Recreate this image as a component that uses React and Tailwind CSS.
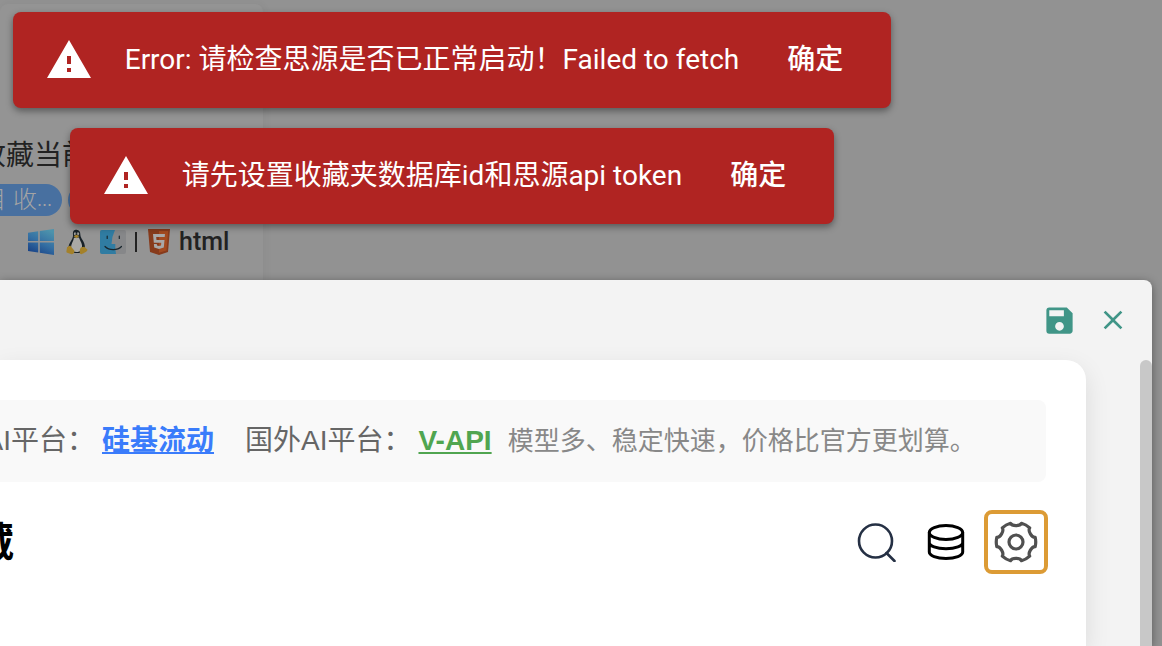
import React from "react";
import { MdWarning, MdSave, MdClose } from "react-icons/md";

const toasts = [
  "Error: 请检查思源是否已正常启动！Failed to fetch",
  "请先设置收藏夹数据库id和思源api token",
];

function WindowsIcon() {
  return (
    <svg viewBox="0 0 26 26" className="size-[26px]" aria-hidden="true">
      <defs>
        <linearGradient id="win" x1="0.7" y1="0" x2="0.2" y2="1">
          <stop offset="0" stopColor="#4d93ac" />
          <stop offset="0.5" stopColor="#346fa3" />
          <stop offset="1" stopColor="#163e84" />
        </linearGradient>
      </defs>
      <path fill="url(#win)" d="M0 3.7 10.2 2.2V12H0ZM11.8 2 26 0V12H11.8ZM0 13.6H10.2V23.4L0 22ZM11.8 13.6H26V26L11.8 23.8Z" />
    </svg>
  );
}

function LinuxIcon() {
  return (
    <svg viewBox="0 0 22 26" className="h-[26px] w-[22px]" aria-hidden="true">
      <path fill="#182128" d="M7 6C6.600 2 8 .8 10.600.8S14.400 3 14.400 6c0 3.500 4.600 6.500 4.600 12.500 0 3.500-3 5.500-8 5.500s-8.500-2-8.500-5C2.500 13.500 7.300 11 7 6Z" />
      <path fill="#aaa9a6" d="M8 8.700 13 8.500C14 12 16.600 14.600 16 18.500 15.500 22 13.500 23 10.500 23S5.500 21.500 5 18.500C5 15 7.500 12 8 8.700Z" />
      <ellipse cx="9" cy="4.800" rx="1.100" ry="1.500" fill="#aaa9a6" />
      <ellipse cx="12" cy="4.800" rx="1.200" ry="1.500" fill="#aaa9a6" />
      <circle cx="9.300" cy="5" r=".5" fill="#182128" />
      <circle cx="11.800" cy="5" r=".5" fill="#182128" />
      <path fill="#a4812a" d="M7.600 7.200 10.300 5.700 13.400 7 10.500 9.200ZM1 18.300 4.200 16.600 8.400 21.700C8.500 24 7.200 25.400 5.500 25.200L.6 23.600C0 22.600 1 20 1 18.300ZM15.200 18.200 18.300 17.700 21.600 20.800C21.500 22.400 17.500 24.500 15.500 25.200 13.400 25.300 13.600 22.500 14 20Z" />
    </svg>
  );
}

function FinderIcon() {
  return (
    <svg viewBox="0 0 26 24" className="h-6 w-[26px]" aria-hidden="true">
      <rect width="26" height="24" rx="2" fill="#868789" />
      <path fill="#307ca2" d="M15 0H2Q0 0 0 2V22Q0 24 2 24H16Q15 19 15.300 14H11.500Q12 6 15 0Z" />
      <path fill="none" stroke="#18262d" strokeWidth="1.200" strokeLinecap="round" d="M7.200 6V8.500M19.300 6V8.500M5 16.500C9 20.600 17.500 20.600 21.500 16.500" />
    </svg>
  );
}

function HtmlIcon() {
  return (
    <svg viewBox="0 0 22 26" className="h-[26px] w-[22px]" aria-hidden="true">
      <path fill="#873b1c" d="M0 0H22L20 23 11 26 2 23Z" />
      <path fill="#a34a20" d="M11 2H20.200L18.500 21.500 11 23.800Z" />
      <path fill="#a8a8a8" d="M5 5H17L16.700 8H8.200L8.500 11H16.500L15.800 18.500 11 20 6.200 18.500 5.900 15H8.800L9 16.500 11 17.100 13 16.500 13.300 13.800H5.800Z" />
    </svg>
  );
}

function BookmarkCard() {
  return (
    <section className="mt-1 flex h-[300px] w-[263px] flex-col overflow-hidden rounded-t-lg bg-[#949494] pt-[132px] text-[#222] shadow-[2px_0_8px_rgba(0,0,0,0.04)]">
      <div className="flex h-10 w-[90px] items-center justify-end text-[28px] whitespace-nowrap">收藏当前</div>
      <div className="mt-1.5 flex h-9 items-center gap-1.5">
        <div className="-ml-10 flex h-8 w-[102px] shrink-0 items-center justify-end rounded-full bg-[#4870a0] pr-2.5 text-2xl font-light whitespace-nowrap text-[#a4a4a4]">
          项目 收<span className="text-lg">...</span>
        </div>
        <div className="h-8 w-24 rounded-full bg-[#4870a0]" />
      </div>
      <div className="mt-1 flex h-10 items-center pl-7">
        <WindowsIcon />
        <span className="ml-3 flex"><LinuxIcon /></span>
        <span className="ml-3 flex"><FinderIcon /></span>
        <span className="ml-[9px] h-5 w-0.5 bg-[#222]" />
        <span className="ml-[11px] flex"><HtmlIcon /></span>
        <span className="ml-[9px] font-['Roboto','Noto_Sans_CJK_SC',sans-serif] text-[25px] font-medium">html</span>
      </div>
    </section>
  );
}

function Toast({ message }) {
  return (
    <div role="alert" className="flex h-24 items-center rounded-lg bg-[#b02422] px-8 text-[28px] whitespace-nowrap text-white shadow-[0_3px_7px_rgba(0,0,0,0.4)]">
      <MdWarning className="size-12" aria-hidden="true" />
      <p className="ml-8">{message}</p>
      <button type="button" className="ml-8 px-4 font-medium">确定</button>
    </div>
  );
}

function Toolbar() {
  return (
    <div className="mt-7 -mr-0.5 flex h-16 items-center justify-between">
      <h1 className="-ml-[66px] text-[40px] font-bold text-black">收藏</h1>
      <div className="flex items-center">
        <button type="button" aria-label="搜索" className="size-10">
          <svg viewBox="0 0 40 40" className="size-10" fill="none" stroke="#253044" strokeWidth="2.600" strokeLinecap="round">
            <circle cx="18.500" cy="19" r="16.500" />
            <path d="m29.500 31 8 8" />
          </svg>
        </button>
        <button type="button" aria-label="数据库" className="ml-[29px] size-10">
          <svg viewBox="0 0 40 40" className="size-10" fill="none" stroke="#000" strokeWidth="3">
            <ellipse cx="20" cy="10.500" rx="16.700" ry="7" />
            <path d="M3.300 10.500V30C3.300 33.500 10.500 36.500 20 36.500S36.700 33.500 36.700 30V10.500M3.300 20.500C3.300 24 10.500 26.700 20 26.700S36.700 24 36.700 20.500" />
          </svg>
        </button>
        <button type="button" aria-label="设置" className="ml-[18px] flex size-16 items-center justify-center rounded-lg border-4 border-[#dc9b35]">
          <svg viewBox="0 0 44 44" className="size-11" fill="none" stroke="#505050" strokeWidth="3.200" strokeLinejoin="round">
            <path d="M16.500 3.300C18 6.500 26 6.500 27.500 3.300Q32 4.500 35.700 7.900C33.700 10.800 37.700 17.700 41.200 17.400Q42.300 22 41.200 26.600C37.700 26.300 33.700 33.200 35.700 36.100Q32 39.500 27.500 40.700C26 37.500 18 37.500 16.500 40.700Q12 39.500 8.300 36.100C10.300 33.200 6.300 26.300 2.800 26.600Q1.700 22 2.800 17.400C6.300 17.700 10.300 10.800 8.300 7.900Q12 4.500 16.500 3.300Z" />
            <circle cx="22" cy="22" r="7" />
          </svg>
        </button>
      </div>
    </div>
  );
}

function SettingsDialog() {
  return (
    <main role="dialog" aria-label="收藏" className="absolute top-[280px] right-2.5 bottom-0 left-0 flex flex-col overflow-hidden rounded-tr-lg bg-[#f3f3f3] shadow-[0_2px_10px_rgba(0,0,0,0.4)]">
      <header className="flex h-20 shrink-0 items-center justify-end gap-5 pr-[23px] text-[#409587]">
        <button type="button" aria-label="保存"><MdSave className="size-[35px]" /></button>
        <button type="button" aria-label="关闭"><MdClose className="size-8" /></button>
      </header>
      <div className="flex min-h-0 flex-1">
        <div className="min-w-0 flex-1 rounded-tr-[20px] bg-white pt-10 pr-10 shadow-[0_8px_24px_rgba(0,0,0,0.1)]">
          <div className="flex h-[82px] items-center overflow-hidden rounded-r-lg bg-[#f9f9f9] text-[28px] whitespace-nowrap text-[#666]">
            <span className="flex w-[95px] shrink-0 justify-end">国内AI平台：</span>
            <a href="#siliconflow" className="ml-[7px] font-bold text-[#3a7cfb] underline">硅基流动</a>
            <span className="ml-[31px]">国外AI平台：</span>
            <a href="#v-api" className="ml-[7px] font-bold text-[#50a550] underline">V-API</a>
            <span className="ml-4 text-[26px] text-[#888]">模型多、稳定快速，价格比官方更划算。</span>
          </div>
          <Toolbar />
        </div>
        <div className="ml-[54px] w-3 shrink-0 rounded-t-md bg-[#c8c8c8]" />
      </div>
    </main>
  );
}

export default function App() {
  return (
    <div className="relative h-screen overflow-hidden bg-[#929292] font-['Liberation_Sans','Noto_Sans_CJK_SC',sans-serif]">
      <BookmarkCard />
      <SettingsDialog />
      <div className="absolute top-3 left-0 flex w-[904px] flex-col items-center gap-5 font-['Roboto','Noto_Sans_CJK_SC',sans-serif]">
        {toasts.map((message) => <Toast key={message} message={message} />)}
      </div>
    </div>
  );
}
